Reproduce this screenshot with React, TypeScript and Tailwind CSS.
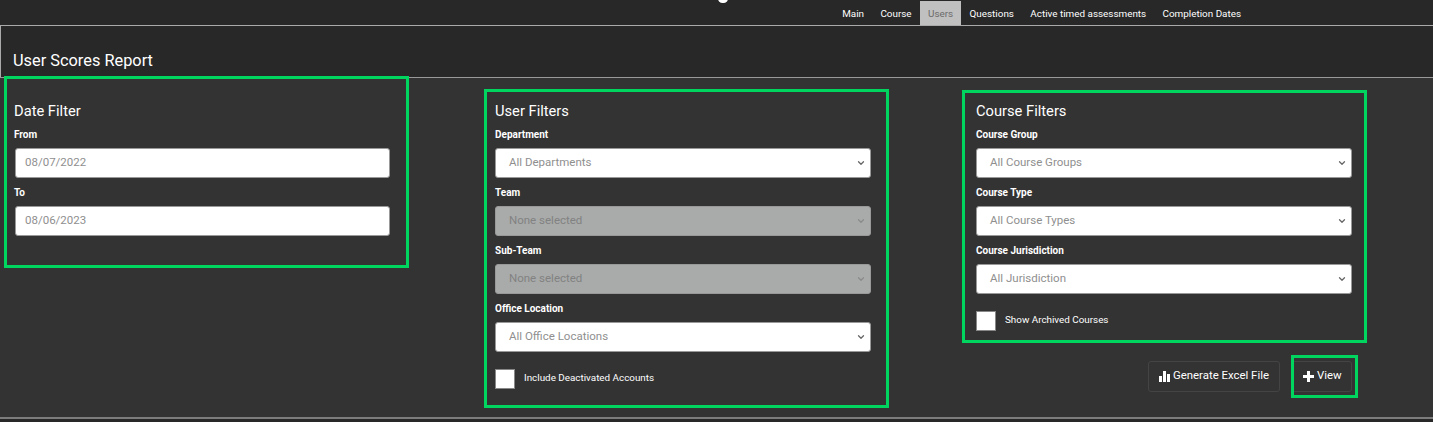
import { ChevronDown } from "lucide-react";

const navItems = ["Main", "Course", "Users", "Questions", "Active timed assessments", "Completion Dates"];

const Label = ({ text }: { text: string }) => (
  <div className="h-[14px] mb-[6px] text-[10px] leading-[14px] font-bold text-white">{text}</div>
);

const Heading = ({ text }: { text: string }) => (
  <h2 className="h-[19px] mt-px mb-[7px] text-[14.7px] leading-[19px] font-normal text-white">{text}</h2>
);

const DateField = ({ label, value }: { label: string; value: string }) => (
  <div className="mb-[8px]">
    <Label text={label} />
    <input
      readOnly
      value={value}
      className="block w-[375px] ml-px h-[30px] pl-[9px] pr-[9px] pb-[2px] bg-white rounded-[3px] border border-[#999] text-[11.5px] text-[#8f8f8f] outline-none"
    />
  </div>
);

const SelectField = ({ label, value, disabled }: { label: string; value: string; disabled?: boolean }) => (
  <div className="mb-[8px]">
    <Label text={label} />
    <div
      className={`flex items-center justify-between w-[376px] h-[30px] pl-[13px] pr-[4px] rounded-[3px] border border-[#999] text-[11.5px] ${
        disabled ? "bg-[#a9abaa] text-[#828282]" : "bg-white text-[#8f8f8f]"
      }`}
    >
      <span className="mb-px">{value}</span>
      <ChevronDown size={10} strokeWidth={3} className={disabled ? "text-[#8a8a8a]" : "text-[#666]"} />
    </div>
  </div>
);

const CheckRow = ({ label }: { label: string }) => (
  <div className="flex items-center mt-[17px]">
    <div className="w-[20px] h-[20px] bg-white border border-[#888]" />
    <span className="ml-[9px] mb-[3px] text-[9.85px] leading-[14px] text-white">{label}</span>
  </div>
);

const App = () => {
  return (
    <div className="relative w-[1433px] h-[422px] overflow-hidden bg-[#282828] font-['Roboto',sans-serif]">
      <div className="flex h-[25px] pl-[834px] pt-px">
        {navItems.map(item => (
          <div
            key={item}
            className={`px-[8.2px] text-[9.9px] leading-[25px] ${item === "Users" ? "bg-[#c0c0c0] text-[#6b6b6b]" : "text-white"}`}
          >
            {item}
          </div>
        ))}
      </div>

      <div className="h-[52px] pl-[12px] pt-[25px] border-t border-[#aaa] border-l">
        <h1 className="text-[16.35px] leading-[19px] font-normal text-white">User Scores Report</h1>
      </div>

      <div className="flex h-[342px] pl-[14px] pt-[23px] bg-[#333] border-t border-[#999] border-b-2 border-b-[#7c7c7c]">
        <div className="w-[481px]">
          <Heading text="Date Filter" />
          <DateField label="From" value="08/07/2022" />
          <DateField label="To" value="08/06/2023" />
        </div>

        <div className="w-[481px]">
          <Heading text="User Filters" />
          <SelectField label="Department" value="All Departments" />
          <SelectField label="Team" value="None selected" disabled />
          <SelectField label="Sub-Team" value="None selected" disabled />
          <SelectField label="Office Location" value="All Office Locations" />
          <CheckRow label="Include Deactivated Accounts" />
        </div>

        <div className="w-[376px]">
          <Heading text="Course Filters" />
          <SelectField label="Course Group" value="All Course Groups" />
          <SelectField label="Course Type" value="All Course Types" />
          <SelectField label="Course Jurisdiction" value="All Jurisdiction" />
          <CheckRow label="Show Archived Courses" />
          <div className="flex justify-end gap-3 mt-[30px]">
            <button className="flex items-center h-[31px] pl-[10px] pr-[10px] pb-px rounded-[3px] border border-[#444] text-[11.4px] text-white">
              <svg width="12" height="11" viewBox="0 0 12 11" className="mr-[2px]" fill="#fff">
                <rect x="0" y="5" width="3" height="6" />
                <rect x="4" y="0" width="3" height="11" />
                <rect x="8" y="3" width="3" height="8" />
              </svg>
              Generate Excel File
            </button>
            <button className="flex items-center w-[60px] h-[31px] pl-[10px] pb-px rounded-[3px] border border-[#444] text-[11.4px] text-white">
              <svg width="11" height="11" viewBox="0 0 11 11" className="mr-[3px]" fill="#fff">
                <rect x="4" y="0" width="3" height="11" />
                <rect x="0" y="4" width="11" height="3" />
              </svg>
              View
            </button>
          </div>
        </div>
      </div>

      {/* green annotation boxes drawn over the page */}
      <div className="absolute left-[4px] top-[76px] w-[405px] h-[192px] border-[3px] border-[#00d65f]" />
      <div className="absolute left-[484px] top-[89px] w-[405px] h-[319px] border-[3px] border-[#00d65f]" />
      <div className="absolute left-[962px] top-[90px] w-[405px] h-[253px] border-[3px] border-[#00d65f]" />
      <div className="absolute left-[1291px] top-[355px] w-[67px] h-[43px] border-[3px] border-[#00d65f]" />
      <div className="absolute left-[718px] top-[-6px] w-[10px] h-[9px] rounded-full bg-white" />
    </div>
  );
};

export default App;
